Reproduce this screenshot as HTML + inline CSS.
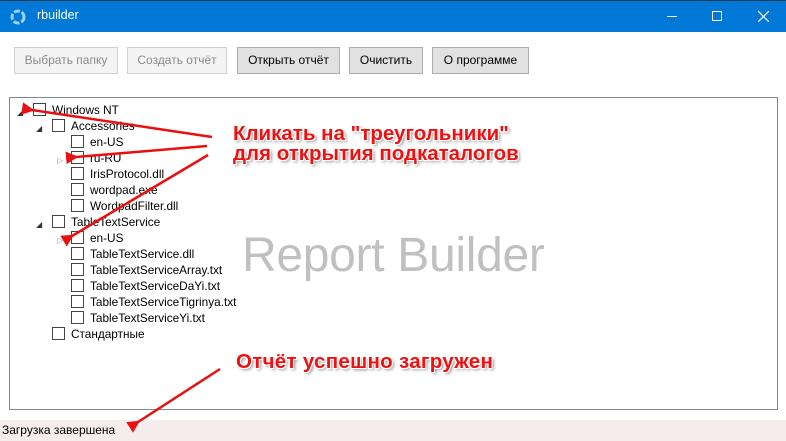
<!DOCTYPE html>
<html><head><meta charset="utf-8"><style>
*{margin:0;padding:0;box-sizing:border-box}
body{width:786px;height:441px;overflow:hidden;background:#fff;font-family:"Segoe UI","Liberation Sans","DejaVu Sans",sans-serif;position:relative;font-size:12px;color:#000}
.tb{position:absolute;left:0;top:0;width:786px;height:32px;background:#0078d7;border-top:1px solid #2b3a4a}
.tb .t{position:absolute;left:37px;top:7px;color:#fff;font-size:12.5px}
.btn{position:absolute;top:47px;height:27px;border:1px solid #adadad;background:#e1e1e1;font-size:12px;text-align:center;line-height:25px}
.dis{background:#f4f4f4;border-color:#d0d0d0;color:#8a8a8a}
.tree{position:absolute;left:9px;top:97px;width:769px;height:313px;border:1px solid #828790}
.r{position:absolute;height:16px;line-height:16px;font-size:11.8px;color:#000;white-space:nowrap}
.cb{position:absolute;width:13px;height:13px;border:1px solid #444;background:#fff;top:1px}
.tri{position:absolute;top:3px;font-size:8px;color:#333}
.st{position:absolute;left:0;top:420px;width:786px;height:21px;background:#f5eded;font-size:12px;line-height:21px;padding-left:2px}
.ann{position:absolute;font-family:"Liberation Sans",sans-serif;font-weight:bold;color:#f01010;font-size:20.5px;letter-spacing:0px;line-height:20px;text-shadow:-1px -1px 0 #fff,1px -1px 0 #fff,-1px 1px 0 #fff,1px 1px 0 #fff,2px 2px 3px #888}
</style></head><body>
<div class="tb">
<svg style="position:absolute;left:10px;top:8px" width="16" height="16"><circle cx="8" cy="8" r="6" fill="none" stroke="#9cd0f5" stroke-width="3" stroke-dasharray="6 2"/></svg>
<div class="t">rbuilder</div>
<div style="position:absolute;left:667px;top:15px;width:10px;height:1px;background:#fff"></div>
<div style="position:absolute;left:712px;top:10px;width:10px;height:10px;border:1px solid #fff"></div>
<svg style="position:absolute;left:758px;top:10px" width="11" height="11"><path d="M0,0 L11,11 M11,0 L0,11" stroke="#fff" stroke-width="1.2"/></svg>
</div>
<div class="btn dis" style="left:14px;width:104px">Выбрать папку</div>
<div class="btn dis" style="left:127px;width:100px">Создать отчёт</div>
<div class="btn" style="left:237px;width:103px">Открыть отчёт</div>
<div class="btn" style="left:349px;width:74px">Очистить</div>
<div class="btn" style="left:432px;width:97px">О программе</div>
<div class="tree"></div>
<div style="position:absolute;left:242px;top:228px;font-size:48px;color:#c0c0c0;font-family:'Liberation Sans',sans-serif;letter-spacing:-0.3px">Report Builder</div>

<div class="r" style="left:17px;top:102px"><span class="tri" style="left:0">◢</span><span class="cb" style="left:16px"></span><span style="position:absolute;left:35px">Windows NT</span></div>
<div class="r" style="left:36px;top:118px"><span class="tri" style="left:0">◢</span><span class="cb" style="left:16px"></span><span style="position:absolute;left:35px">Accessories</span></div>
<div class="r" style="left:55px;top:134px"><span class="cb" style="left:16px"></span><span style="position:absolute;left:35px">en-US</span></div>
<div class="r" style="left:55px;top:150px"><span class="tri" style="left:2px;color:#999">▷</span><span class="cb" style="left:16px"></span><span style="position:absolute;left:35px">ru-RU</span></div>
<div class="r" style="left:55px;top:166px"><span class="cb" style="left:16px"></span><span style="position:absolute;left:35px">IrisProtocol.dll</span></div>
<div class="r" style="left:55px;top:182px"><span class="cb" style="left:16px"></span><span style="position:absolute;left:35px">wordpad.exe</span></div>
<div class="r" style="left:55px;top:198px"><span class="cb" style="left:16px"></span><span style="position:absolute;left:35px">WordpadFilter.dll</span></div>
<div class="r" style="left:36px;top:214px"><span class="tri" style="left:0">◢</span><span class="cb" style="left:16px"></span><span style="position:absolute;left:35px">TableTextService</span></div>
<div class="r" style="left:55px;top:230px"><span class="tri" style="left:2px;color:#999">▷</span><span class="cb" style="left:16px"></span><span style="position:absolute;left:35px">en-US</span></div>
<div class="r" style="left:55px;top:246px"><span class="cb" style="left:16px"></span><span style="position:absolute;left:35px">TableTextService.dll</span></div>
<div class="r" style="left:55px;top:262px"><span class="cb" style="left:16px"></span><span style="position:absolute;left:35px">TableTextServiceArray.txt</span></div>
<div class="r" style="left:55px;top:278px"><span class="cb" style="left:16px"></span><span style="position:absolute;left:35px">TableTextServiceDaYi.txt</span></div>
<div class="r" style="left:55px;top:294px"><span class="cb" style="left:16px"></span><span style="position:absolute;left:35px">TableTextServiceTigrinya.txt</span></div>
<div class="r" style="left:55px;top:310px"><span class="cb" style="left:16px"></span><span style="position:absolute;left:35px">TableTextServiceYi.txt</span></div>
<div class="r" style="left:36px;top:326px"><span class="cb" style="left:16px"></span><span style="position:absolute;left:35px">Стандартные</span></div>

<div class="st">Загрузка завершена</div>

<div class="ann" style="left:233px;top:124px">Кликать на "треугольники"<br>для открытия подкаталогов</div>
<div class="ann" style="left:236px;top:352px;letter-spacing:0.3px">Отчёт успешно загружен</div>

<svg style="position:absolute;left:0;top:0" width="786" height="441">
<defs><marker id="a" markerWidth="5" markerHeight="5" refX="1" refY="2.5" orient="auto"><path d="M5,0 L0,2.5 L5,5 Z" fill="#e81010"/></marker></defs>
<g stroke="#e81010" stroke-width="2.5" fill="none" marker-end="url(#a)">
<line x1="212" y1="137" x2="32" y2="110"/>
<line x1="207" y1="146" x2="76" y2="157"/>
<line x1="208" y1="155" x2="72" y2="236"/>
<line x1="220" y1="369" x2="138" y2="422"/>
</g></svg>
</body></html>
